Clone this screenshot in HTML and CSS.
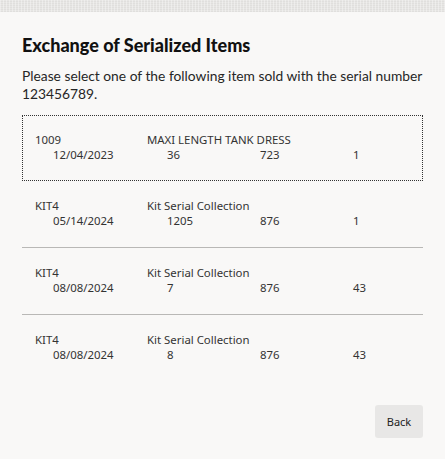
FILE: index.html
```html
<!DOCTYPE html>
<html lang="en">
<head>
<meta charset="utf-8">
<title>Exchange of Serialized Items</title>
<link rel="stylesheet" href="styles.css">
</head>
<body>
<div class="topbar"></div>
<main class="dialog">
  <h1 class="title">Exchange of Serialized Items</h1>
  <p class="intro">Please select one of the following item sold with the serial number 123456789.</p>
  <ul class="items">
    <li class="item focused">
      <div class="line1"><span>1009</span><span>MAXI LENGTH TANK DRESS</span></div>
      <div class="line2"><span>12/04/2023</span><span>36</span><span>723</span><span>1</span></div>
    </li>
    <li class="item">
      <div class="line1"><span>KIT4</span><span>Kit Serial Collection</span></div>
      <div class="line2"><span>05/14/2024</span><span>1205</span><span>876</span><span>1</span></div>
    </li>
    <li class="item">
      <div class="line1"><span>KIT4</span><span>Kit Serial Collection</span></div>
      <div class="line2"><span>08/08/2024</span><span>7</span><span>876</span><span>43</span></div>
    </li>
    <li class="item last">
      <div class="line1"><span>KIT4</span><span>Kit Serial Collection</span></div>
      <div class="line2"><span>08/08/2024</span><span>8</span><span>876</span><span>43</span></div>
    </li>
  </ul>
  <div class="actions"><button class="btn" type="button">Back</button></div>
</main>
</body>
</html>
```

FILE: styles.css
```css
html, body {
  margin: 0;
  padding: 0;
  background: #f9f8f7;
  color: #262626;
  font-family: "Noto Sans", "Open Sans", sans-serif;
}
.topbar {
  height: 12px;
  background-color: #e7e6e4;
  background-image:
    repeating-linear-gradient(90deg, rgba(255,255,255,0.35) 0 1px, transparent 1px 3px),
    repeating-linear-gradient(0deg, rgba(0,0,0,0.03) 0 1px, transparent 1px 2px);
}
.dialog {
  padding: 21px 22px 0;
}
.title {
  margin: 0;
  font-family: "Lato", sans-serif;
  font-weight: 900;
  font-size: 18px;
  line-height: 24px;
  color: #111;
}
.intro {
  margin: 10px -8px 0 0;
  font-family: "Lato", sans-serif;
  font-size: 13.8px;
  line-height: 18px;
  color: #262626;
}
.items {
  list-style: none;
  margin: 12px 0 0;
  padding: 0;
}
.item {
  height: 67px;
  box-sizing: border-box;
  padding-top: 17px;
  border-bottom: 1px solid #b9b8b6;
  font-size: 11.4px;
  line-height: 15px;
  color: #333;
}
.item.focused {
  height: 66px;
  border: 1px dotted #333;
  padding-top: 16px;
}
.item.last {
  border-bottom: none;
}
.line1 {
  display: grid;
  grid-template-columns: 112px auto;
  padding-left: 13px;
}
.line2 {
  display: grid;
  grid-template-columns: 114px 93px 93px auto;
  padding-left: 31px;
}
.item.focused .line1 { padding-left: 12px; }
.item.focused .line2 { padding-left: 30px; }
.actions {
  display: flex;
  justify-content: flex-end;
  margin-top: 23px;
}
.btn {
  width: 48px;
  height: 33px;
  border: none;
  border-radius: 3px;
  background: #e8e7e6;
  color: #222;
  font-family: "Noto Sans", sans-serif;
  font-size: 11px;
  padding: 0;
}
```
